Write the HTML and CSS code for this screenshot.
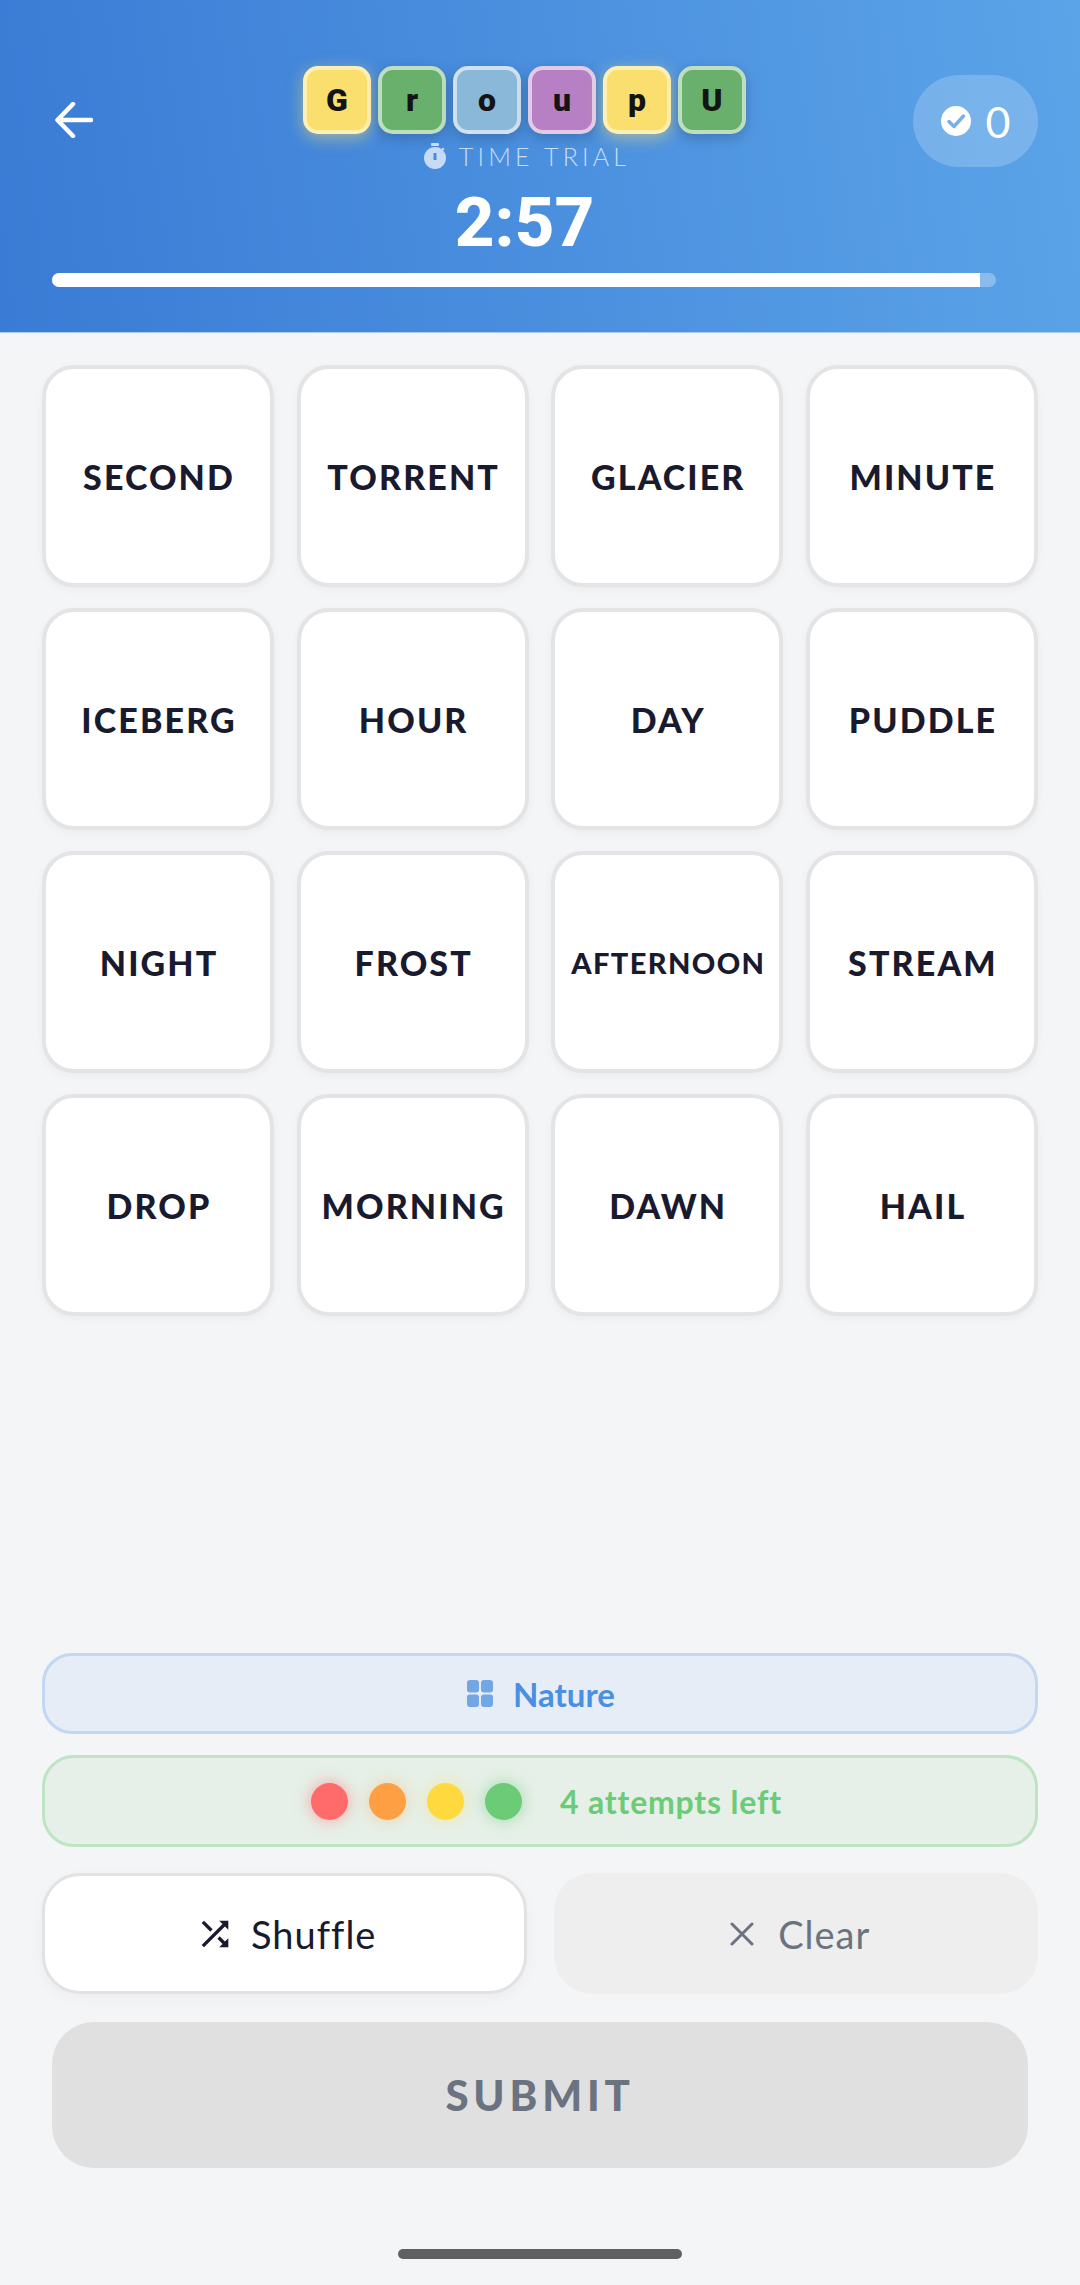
FILE: index.html
```html
<!DOCTYPE html>
<html lang="en">
<head>
    <meta charset="UTF-8">
    <meta name="viewport" content="width=device-width, initial-scale=1.0">
    <title>GroupU Time Trial</title>
    <link rel="stylesheet" href="styles.css">
</head>
<body>
    <header class="top-bar">
        <div class="top-row">
            <button class="back-btn" aria-label="Back">
                <svg width="38" height="36" viewBox="0 0 38 36" fill="none" stroke="#fff" stroke-width="4.500" stroke-linecap="round" stroke-linejoin="round">
                    <path d="M36 18H3M18 2 2.500 18 18 34"/>
                </svg>
            </button>
            <div class="title-col">
                <div class="logo">
                    <span class="tile yellow">G</span>
                    <span class="tile green">r</span>
                    <span class="tile blue">o</span>
                    <span class="tile purple">u</span>
                    <span class="tile yellow">p</span>
                    <span class="tile green">U</span>
                </div>
                <div class="mode">
                    <svg width="22" height="26" viewBox="0 0 22 26">
                        <rect x="7" y="0" width="8" height="3" rx="1" fill="#c7dbf6"/>
                        <path d="M17 6.500l2-2 1.500 1.500-2 2z" fill="#c7dbf6"/>
                        <path fill-rule="evenodd" d="M11 4a11 11 0 1 1 0 22 11 11 0 0 1 0-22zM9.500 10v7h3v-7z" fill="#c7dbf6"/>
                    </svg>
                    <span>TIME TRIAL</span>
                </div>
                <div class="timer">2:57</div>
            </div>
            <div class="score-pill">
                <svg width="30" height="30" viewBox="0 0 30 30">
                    <circle cx="15" cy="15" r="15" fill="#fff"/>
                    <path d="M8 15.500l5 5L22.500 10" fill="none" stroke="#7ab0ea" stroke-width="3.500" stroke-linecap="round" stroke-linejoin="round"/>
                </svg>
                <span>0</span>
            </div>
        </div>
        <div class="progress">
            <div class="progress-fill" style="width: 98.3%"></div>
        </div>
    </header>

    <main class="board">
        <div class="card">SECOND</div>
        <div class="card">TORRENT</div>
        <div class="card">GLACIER</div>
        <div class="card">MINUTE</div>
        <div class="card">ICEBERG</div>
        <div class="card">HOUR</div>
        <div class="card">DAY</div>
        <div class="card">PUDDLE</div>
        <div class="card">NIGHT</div>
        <div class="card">FROST</div>
        <div class="card small">AFTERNOON</div>
        <div class="card">STREAM</div>
        <div class="card">DROP</div>
        <div class="card">MORNING</div>
        <div class="card">DAWN</div>
        <div class="card">HAIL</div>
    </main>

    <section class="controls">
        <div class="hint">
            <svg width="26" height="27" viewBox="0 0 26 27" fill="#72a6e4">
                <rect x="0" y="0" width="12" height="12.500" rx="3"/>
                <rect x="14" y="0" width="12" height="12.500" rx="3"/>
                <rect x="0" y="14.500" width="12" height="12.500" rx="3"/>
                <rect x="14" y="14.500" width="12" height="12.500" rx="3"/>
            </svg>
            <span>Nature</span>
        </div>
        <div class="attempts">
            <div class="dots">
                <span class="dot red"></span>
                <span class="dot orange"></span>
                <span class="dot gold"></span>
                <span class="dot lime"></span>
            </div>
            <span>4 attempts left</span>
        </div>
        <div class="actions">
            <button class="action shuffle">
                <svg width="40" height="40" viewBox="0 0 24 24" fill="#1a1a2e">
                    <path d="M10.590 9.170 5.410 4 4 5.410l5.170 5.170 1.420-1.410zM14.500 4l2.040 2.040L4 18.590 5.410 20 17.960 7.460 20 9.500V4h-5.500zm.33 9.410-1.410 1.410 3.130 3.130L14.500 20H20v-5.500l-2.040 2.040-3.130-3.130z"/>
                </svg>
                Shuffle
            </button>
            <button class="action clear">
                <svg width="24" height="24" viewBox="0 0 24 24" fill="none" stroke="#6b7280" stroke-width="3" stroke-linecap="round">
                    <path d="M2 2l20 20M22 2 2 22"/>
                </svg>
                Clear
            </button>
        </div>
        <button class="submit">SUBMIT</button>
        <div class="home-bar"></div>
    </section>
</body>
</html>
```

FILE: styles.css
```css
* {
    box-sizing: border-box;
}
body {
    font-family: 'Lato', 'Noto Sans', sans-serif;
    margin: 0;
    min-height: 100vh;
    background-color: #f4f5f7;
    color: #1a1a2e;
    display: flex;
    flex-direction: column;
}
button {
    font-family: inherit;
    border: none;
    background: none;
    padding: 0;
}

/* top bar */
.top-bar {
    padding: 66px 42px 45px 52px;
    background: linear-gradient(82deg, #3a7bd5, #5ba4e8);
    border-bottom: 1px solid #a9c9ef;
}
.top-row {
    display: flex;
    align-items: flex-start;
}
.back-btn {
    width: 84px;
    margin-top: 36px;
    padding-left: 3px;
    text-align: left;
    line-height: 0;
}
.title-col {
    flex: 1;
    display: flex;
    flex-direction: column;
    align-items: center;
}
.logo {
    display: flex;
    gap: 7px;
}
.tile {
    width: 68px;
    height: 68px;
    display: flex;
    align-items: center;
    justify-content: center;
    border: 4px solid;
    border-radius: 15px;
    font-family: 'Roboto', sans-serif;
    font-weight: 900;
    font-size: 32px;
    color: #141414;
    box-shadow: 0 4px 14px rgba(0, 0, 0, 0.2);
}
.yellow {
    background-color: #fbdf6e;
    border-color: #fdf0b2;
    box-shadow: 0 4px 16px rgba(251, 223, 110, 0.5);
}
.green {
    background-color: #69b06c;
    border-color: #bedfbf;
}
.blue {
    background-color: #8ab8d8;
    border-color: #cfe0ee;
}
.purple {
    background-color: #b880c4;
    border-color: #e3cbe8;
}
.mode {
    display: flex;
    align-items: center;
    gap: 13px;
    margin-top: 8px;
    padding-left: 5px;
    height: 28px;
    font-weight: 300;
    font-size: 25px;
    letter-spacing: 4.2px;
    color: rgba(255, 255, 255, 0.7);
}
.timer {
    margin-top: 18px;
    font-family: 'Roboto', sans-serif;
    font-weight: 800;
    font-size: 69px;
    line-height: 70px;
    color: #fff;
}
.score-pill {
    width: 125px;
    height: 92px;
    margin-top: 9px;
    display: flex;
    align-items: center;
    justify-content: center;
    gap: 15px;
    border-radius: 46px;
    background-color: rgba(255, 255, 255, 0.2);
    color: #fff;
    font-size: 43px;
}
.progress {
    height: 14px;
    margin: 15px 42px 0 0;
    border-radius: 7px;
    background-color: rgba(255, 255, 255, 0.3);
    overflow: hidden;
}
.progress-fill {
    height: 100%;
    background-color: #fff;
}

/* word grid */
.board {
    display: grid;
    grid-template-columns: repeat(4, 1fr);
    grid-auto-rows: 222px;
    gap: 21px 22.6px;
    padding: 32px 42px 0;
}
.card {
    display: flex;
    align-items: center;
    justify-content: center;
    padding-left: 2px;
    background-color: #fff;
    border: 4px solid #e4e4e6;
    border-radius: 32px;
    box-shadow: 0 3px 10px rgba(0, 0, 0, 0.04);
    font-weight: 900;
    font-size: 34px;
    letter-spacing: 2.1px;
}
.card.small {
    font-size: 29px;
    letter-spacing: 1.4px;
}

/* bottom controls */
.controls {
    margin-top: auto;
    padding: 0 42px;
    display: flex;
    flex-direction: column;
}
.hint {
    height: 81px;
    display: flex;
    align-items: center;
    justify-content: center;
    gap: 20px;
    padding-left: 2px;
    background-color: #e6edf6;
    border: 3px solid #c2d8f2;
    border-radius: 30px;
    color: #4a90e2;
    font-weight: 700;
    font-size: 33px;
}
.attempts {
    height: 92px;
    margin-top: 21px;
    padding-left: 13px;
    display: flex;
    align-items: center;
    justify-content: center;
    gap: 38px;
    background-color: #e6f0e8;
    border: 3px solid #bee4c3;
    border-radius: 32px;
    color: #6bcb77;
    font-weight: 700;
    font-size: 32px;
    letter-spacing: 0.8px;
}
.dots {
    display: flex;
    gap: 21px;
}
.dot {
    width: 37px;
    height: 37px;
    border-radius: 50%;
}
.red {
    background-color: #ff6b6b;
    box-shadow: 0 0 16px rgba(255, 107, 107, 0.6);
}
.orange {
    background-color: #ff9f43;
    box-shadow: 0 0 16px rgba(255, 159, 67, 0.4);
}
.gold {
    background-color: #ffd93d;
    box-shadow: 0 0 16px rgba(255, 217, 61, 0.4);
}
.lime {
    background-color: #6bcb77;
    box-shadow: 0 0 16px rgba(107, 203, 119, 0.6);
}
.actions {
    display: grid;
    grid-template-columns: 1fr 1fr;
    gap: 27px;
    margin-top: 26px;
}
.action {
    height: 121px;
    display: flex;
    align-items: center;
    justify-content: center;
    gap: 16px;
    border-radius: 38px;
    font-size: 38px;
    letter-spacing: 1px;
}
.shuffle {
    padding-left: 3px;
    background-color: #fff;
    border: 3px solid #e2e2e4;
    box-shadow: 0 4px 14px rgba(0, 0, 0, 0.04);
    color: #1a1a2e;
}
.clear {
    padding-left: 9px;
    background-color: #eeeeee;
    color: #6b7280;
    gap: 24px;
}
.submit {
    height: 146px;
    margin: 28px 10px 0;
    border-radius: 42px;
    background-color: #e0e0e0;
    color: #6b7280;
    font-weight: 900;
    font-size: 42px;
    letter-spacing: 4.8px;
}
.home-bar {
    width: 284px;
    height: 10px;
    margin: 81px auto 26px;
    border-radius: 5px;
    background-color: #606060;
}
```
